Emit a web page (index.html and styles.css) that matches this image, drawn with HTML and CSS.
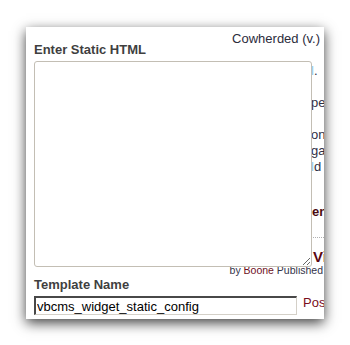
FILE: index.html
```html
<!DOCTYPE html>
<html lang="en">
<head>
  <meta charset="UTF-8" />
  <title>Static HTML widget</title>
  <link rel="stylesheet" href="styles.css">
</head>
<body>
  <!-- Screenshot frame -->
  <div class="shot">
    <div class="panel">
      <!-- Widget config form -->
      <form class="config">
        <label class="field-label" for="html">Enter Static HTML</label>
        <textarea id="html"></textarea>
        <label class="field-label name-label" for="tpl">Template Name</label>
        <div class="name-row">
          <input type="text" id="tpl" value="vbcms_widget_static_config">
          <span class="post">Post</span>
        </div>
      </form>

      <!-- Page content peeking out beside the form -->
      <div class="side">
        <div class="cow">Cowherded (v.)</div>
        <div class="txt"><span class="lnk">l</span>.<br><br>pe<span class="pur">i</span><br><br>on,<br>gai<br><span class="lnk">l</span>d</div>
        <div class="en">en</div>
        <div class="dots"></div>
        <div class="vi">Vil</div>
        <div class="by">by <span class="boone">Boone</span> Published</div>
      </div>
    </div>
  </div>
</body>
</html>
```

FILE: styles.css
```css
/* ---------------------------------------
   1. BASE
--------------------------------------- */
* {
  margin: 0;
  padding: 0;
  box-sizing: border-box;
}

body {
  background: #fff;
  font-family: 'Liberation Sans', Arial, sans-serif;
  font-size: 13px;
  line-height: 16px;
  color: #333;
}

/* ---------------------------------------
   2. FRAME + PANEL
--------------------------------------- */
.shot {
  padding: 27px 26px 26px;
}

.panel {
  width: 298px;
  height: 292px;
  background: #fff;
  box-shadow: 0 4px 12px rgba(0, 0, 0, 0.75);
  overflow: hidden;
  display: grid;
  grid-template-columns: 278px minmax(0, 1fr);
  column-gap: 1px;
  padding-left: 8px;
}

/* ---------------------------------------
   3. FORM (sits over the page text)
--------------------------------------- */
.config {
  padding-top: 15px;
  display: flex;
  flex-direction: column;
  position: relative;
  z-index: 1;
}

.field-label {
  display: block;
  font-weight: bold;
  font-size: 13px;
  line-height: 15px;
  color: #3f3f3f;
}

.config textarea {
  display: block;
  width: 278px;
  height: 206px;
  margin-top: 4px;
  border: 1px solid #c3beb4;
  border-radius: 3px;
  background: #fff;
  font-family: 'Liberation Sans', Arial, sans-serif;
  font-size: 13px;
}

.name-label {
  margin-top: 10px;
}

.name-row {
  display: flex;
  align-items: flex-start;
  gap: 6px;
  margin-top: 4px;
  white-space: nowrap;
}

.name-row input {
  width: 263px;
  height: 19px;
  flex: none;
  border-top: 2px solid #484848;
  border-left: 2px solid #484848;
  border-right: 1px solid #d4d0c8;
  border-bottom: 1px solid #d4d0c8;
  padding: 0 0 0 1px;
  font-family: 'Liberation Sans', Arial, sans-serif;
  font-size: 13px;
  color: #000;
  outline: none;
}

.post {
  margin-top: -1px;
  color: #7a0d1c;
}

/* ---------------------------------------
   4. SIDE TEXT
--------------------------------------- */
.side {
  min-width: 0;
  padding-top: 4px;
  display: flex;
  flex-direction: column;
  align-items: flex-start;
  white-space: nowrap;
  color: #2f2f45;
}

.cow {
  align-self: flex-end;
  padding-right: 4px;
  color: #2c2c3c;
}

.txt {
  margin-top: 16px;
  margin-left: -2px;
}

.lnk {
  color: #8cc8ee;
}

.pur {
  color: #5a3a8a;
}

.en {
  margin-top: 29px;
  margin-left: -1px;
  font-weight: bold;
  color: #4a0a10;
}

.dots {
  width: 100%;
  margin-top: 17px;
  border-top: 1px dotted #b0b0b0;
}

.vi {
  margin-top: 10px;
  font-size: 15px;
  line-height: 18px;
  font-weight: bold;
  color: #5a0712;
}

.by {
  align-self: flex-end;
  margin-top: -2px;
  padding-right: 1px;
  font-size: 10.5px;
  line-height: 13px;
  color: #33334a;
}

.boone {
  color: #6e1024;
}
```
